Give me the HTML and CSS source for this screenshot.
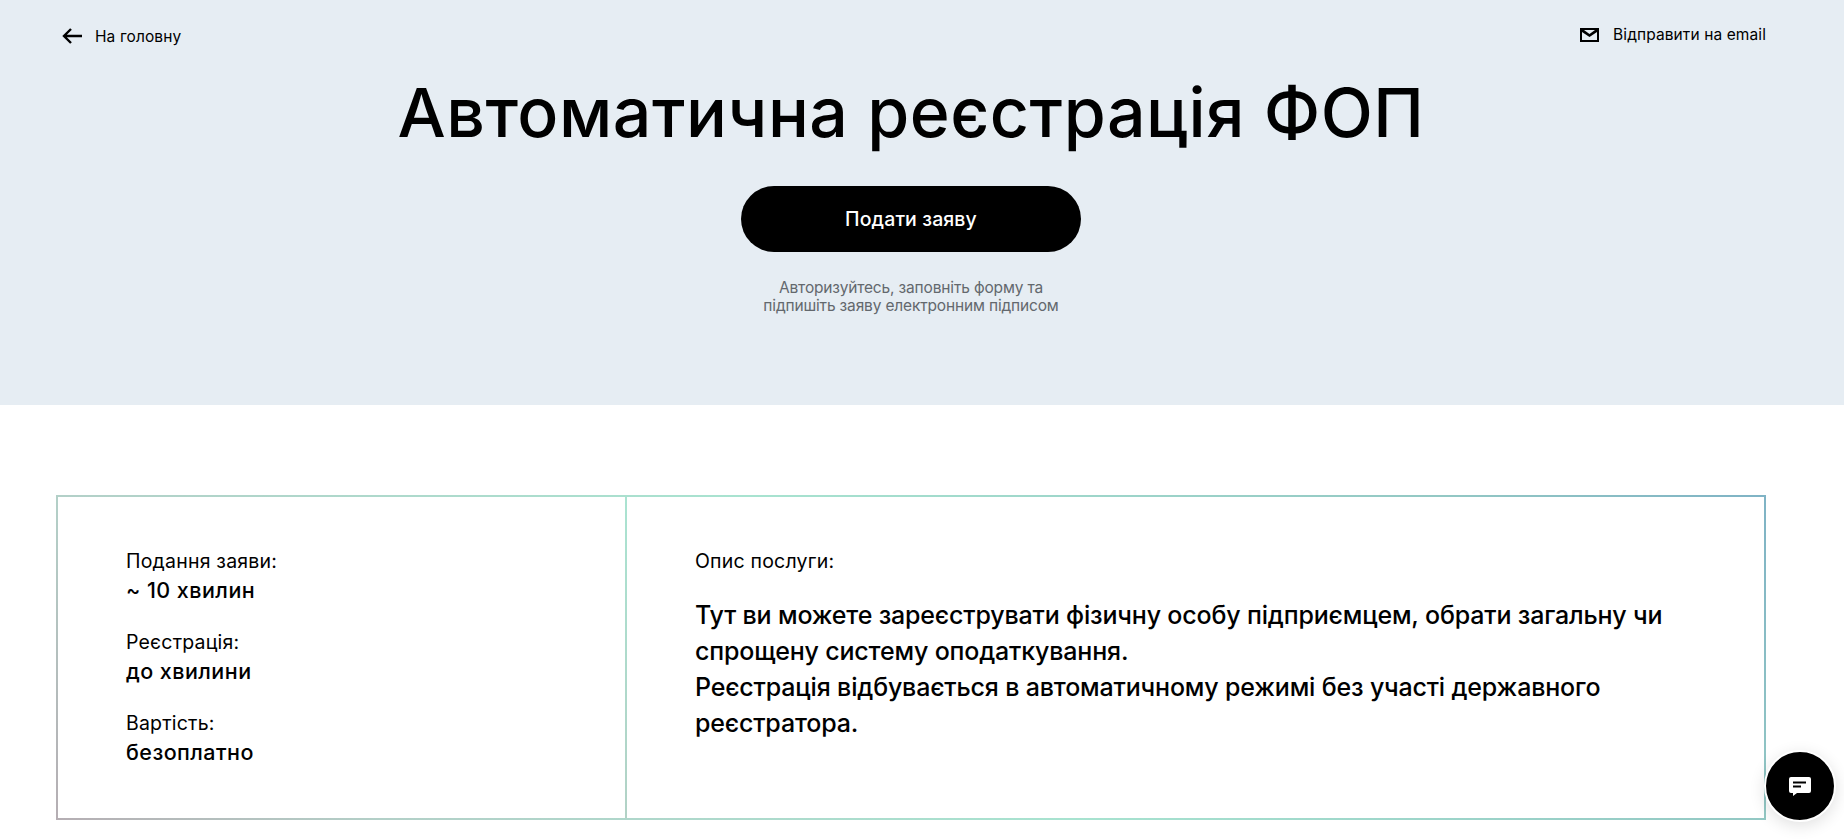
FILE: index.html
```html
<!DOCTYPE html>
<html lang="uk">
<head>
	<meta charset="UTF-8">
	<title>Автоматична реєстрація ФОП</title>
	<link rel="stylesheet" href="styles.css">
</head>
<body>
	<div class="hero">
		<div class="topbar">
			<a class="toplink back">
				<svg width="22" height="22" viewBox="0 0 22 22"><path d="M21 11H3M10 4l-7 7 7 7" fill="none" stroke="#000" stroke-width="2.400"/></svg>
				<span>На головну</span>
			</a>
			<a class="toplink mail">
				<svg width="19" height="14" viewBox="0 0 19 14"><path fill-rule="evenodd" d="M0 0h19v14H0zM2 4v8h15V4l-7.500 5zM4 2l5.500 4L15 2z" fill="#000"/></svg>
				<span>Відправити на email</span>
			</a>
		</div>
		<h1>Автоматична реєстрація ФОП</h1>
		<div class="btn">Подати заяву</div>
		<p class="hint">Авторизуйтесь, заповніть форму та<br>підпишіть заяву електронним підписом</p>
	</div>
	<div class="content">
		<div class="card">
			<div class="side">
				<div class="fact">
					<p class="label">Подання заяви:</p>
					<p class="val">~ 10 хвилин</p>
				</div>
				<div class="fact">
					<p class="label">Реєстрація:</p>
					<p class="val">до хвилини</p>
				</div>
				<div class="fact">
					<p class="label">Вартість:</p>
					<p class="val">безоплатно</p>
				</div>
			</div>
			<div class="descr">
				<p class="label">Опис послуги:</p>
				<p class="text">Тут ви можете зареєструвати фізичну особу підприємцем, обрати загальну чи спрощену систему оподаткування.<br>Реєстрація відбувається в автоматичному режимі без участі державного реєстратора.</p>
			</div>
		</div>
	</div>
	<div class="chat">
		<svg width="22" height="19" viewBox="0 0 22 19"><path fill-rule="evenodd" d="M2 0h18a2 2 0 0 1 2 2v12a2 2 0 0 1-2 2H8l-4 3v-3H2a2 2 0 0 1-2-2V2a2 2 0 0 1 2-2zM4 4.500v2h13v-2zM4 8.500v2h8v-2z" fill="#fff"/></svg>
	</div>
</body>
</html>
```

FILE: styles.css
```css
*{
	margin: 0;
	padding: 0;
	box-sizing: border-box;
}
html,body{
	height: 839px;
	overflow: hidden;
}
body{
	font-family: "Inter", "Noto Sans", sans-serif;
	color: #000;
	background: #fff;
}
.hero{
	height: 405px;
	background: #e6edf3;
	padding: 25px 78px 0 61px;
	text-align: center;
}
.topbar{
	display: flex;
	justify-content: space-between;
	align-items: flex-start;
}
.toplink{
	display: flex;
	align-items: center;
	font-size: 15.500px;
	letter-spacing: 0.100px;
}
.back{
	gap: 12px;
}
.mail{
	gap: 14px;
}
h1{
	font-size: 68px;
	font-weight: 500;
	line-height: 80px;
	letter-spacing: 0.550px;
	margin: 25px 0 0 -5px;
}
.btn{
	width: 340px;
	height: 66px;
	margin: 34px auto 0;
	position: relative;
	left: -2.500px;
	border-radius: 33px;
	background: #000;
	color: #fff;
	font-size: 19.500px;
	font-weight: 500;
	letter-spacing: 0.100px;
	line-height: 66px;
}
.hint{
	margin: 27px 0 0 -5px;
	font-size: 15.500px;
	letter-spacing: -0.160px;
	line-height: 18px;
	color: #63686d;
}
.content{
	padding: 90px 78px 0 56px;
}
.card{
	display: flex;
	height: 325px;
	border: 2px solid;
	border-image: linear-gradient(45deg, #b5aeb3 0%, #b3d0c8 16%, #a8e3d0 50%, #93c8c4 84%, #7fb3c5 100%) 1;
}
.side{
	width: 569px;
	padding: 51px 0 0 68px;
	border-right: 2px solid;
	border-image: linear-gradient(to bottom, #aae3d1, #b2d2c6) 1;
}
.fact{
	margin-bottom: 23px;
}
.label{
	font-size: 19.500px;
	letter-spacing: 0.200px;
	line-height: 26px;
}
.val{
	font-size: 21.500px;
	font-weight: 500;
	letter-spacing: 0.450px;
	line-height: 32px;
}
.descr{
	flex: 1;
	padding: 51px 60px 0 68px;
}
.text{
	margin-top: 23px;
	font-size: 25px;
	font-weight: 500;
	letter-spacing: -0.170px;
	line-height: 36px;
}
.chat{
	position: absolute;
	left: 1764px;
	top: 750px;
	width: 72px;
	height: 72px;
	border-radius: 50%;
	background: #000;
	border: 2px solid #fff;
	box-shadow: 0 4px 16px rgba(0,0,0,.12);
	display: flex;
	align-items: center;
	justify-content: center;
}
```
